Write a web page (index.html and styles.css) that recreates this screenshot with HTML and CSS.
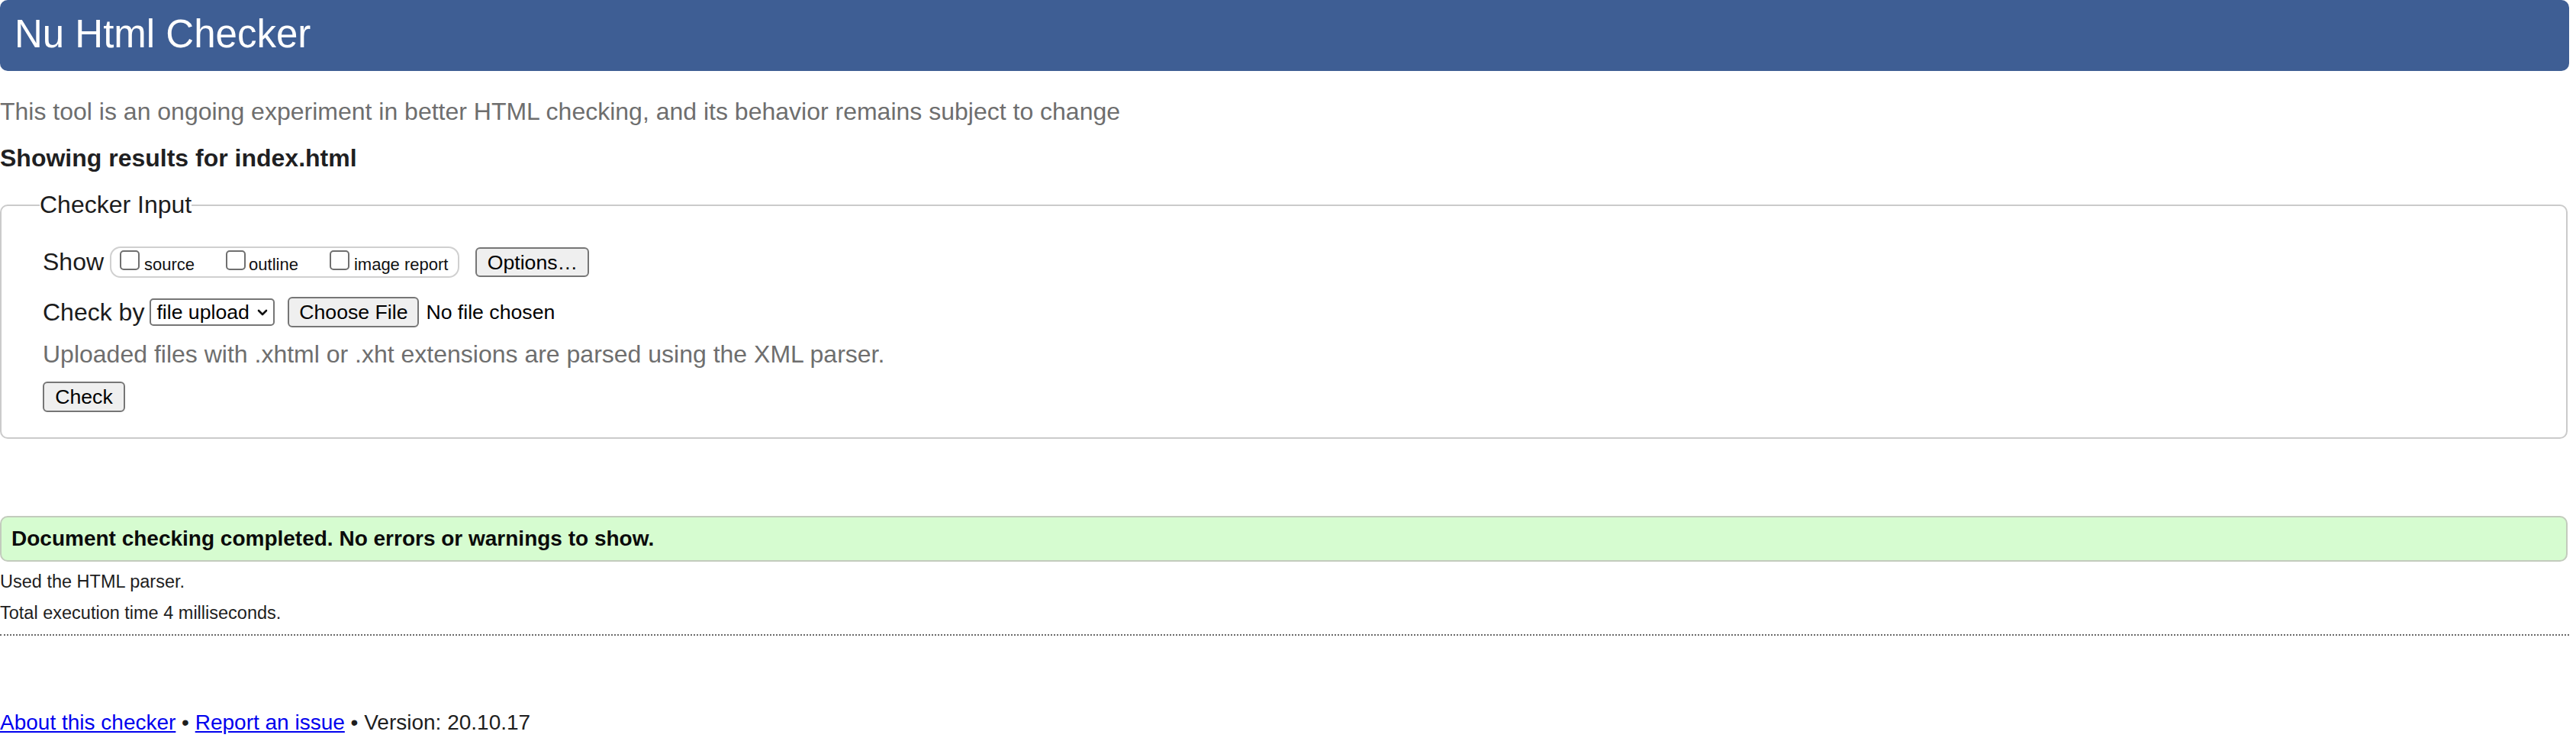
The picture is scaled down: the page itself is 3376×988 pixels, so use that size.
FILE: index.html
```html
<!DOCTYPE html>
<html lang="en">
<head>
<meta charset="utf-8">
<title>Showing results for index.html - Nu Html Checker</title>
<link rel="stylesheet" href="styles.css">
</head>
<body>
<header class="masthead"><h1 class="title">Nu Html Checker</h1></header>
<p class="intro">This tool is an ongoing experiment in better HTML checking, and its behavior remains subject to change</p>
<h2 class="results-for">Showing results for index.html</h2>
<form class="checker-form">
  <fieldset class="checker-input">
    <legend class="legend">Checker Input</legend>
    <div class="row row-show">
      <span class="row-label">Show</span>
      <span class="show-group">
        <label class="opt"><input type="checkbox" class="cb"><span class="opt-text">source</span></label>
        <label class="opt"><input type="checkbox" class="cb"><span class="opt-text opt-tight">outline</span></label>
        <label class="opt"><input type="checkbox" class="cb"><span class="opt-text">image report</span></label>
      </span>
      <button type="button" class="btn btn-options">Options…</button>
    </div>
    <div class="row row-checkby">
      <span class="row-label">Check by</span>
      <span class="select-wrap">
        <select class="select"><option>file upload</option></select>
        <svg class="chev" width="14" height="9" viewBox="0 0 14 9" aria-hidden="true"><path d="M2 2 L7 7 L12 2" fill="none" stroke="#111" stroke-width="2.6" stroke-linecap="round" stroke-linejoin="round"/></svg>
      </span>
      <button type="button" class="btn btn-file">Choose File</button>
      <span class="file-status">No file chosen</span>
    </div>
    <p class="hint">Uploaded files with .xhtml or .xht extensions are parsed using the XML parser.</p>
    <div class="row row-submit">
      <button type="button" class="btn btn-check">Check</button>
    </div>
  </fieldset>
</form>
<div class="success">Document checking completed. No errors or warnings to show.</div>
<p class="details details-first">Used the HTML parser.</p>
<p class="details">Total execution time 4 milliseconds.</p>
<hr class="sep">
<footer class="footer"><a class="flink" href="#about">About this checker</a> • <a class="flink" href="#issue">Report an issue</a> • Version: 20.10.17</footer>
</body>
</html>
```
FILE: styles.css
```css
html, body {
  margin: 0;
  padding: 0;
  background: #fff;
}

body {
  padding-right: 9px;
  font-family: "Liberation Sans", Arial, Helvetica, sans-serif;
  font-size: 32px;
  color: #222;
}

.masthead {
  margin: 0;
  height: 93px;
  background: #3e5e94;
  border-radius: 10px;
  display: flex;
  align-items: center;
}

.title {
  margin: 0 0 3px 0;
  padding: 0 0 0 19px;
  font-size: 51px;
  font-weight: normal;
  line-height: 60px;
  color: #fff;
}

.intro {
  margin: 34px 0 0;
  line-height: 38px;
  color: #6e6e6e;
}

.results-for {
  margin: 23px 0 0;
  font-size: 32px;
  line-height: 38px;
  font-weight: bold;
  color: #1f1f22;
}

.checker-form {
  margin: 24px 0 0;
}

.checker-input {
  margin: 0 2px 0 0;
  padding: 0 0 33px 54px;
  border: 2px solid #cbcbcb;
  border-radius: 10px;
  min-width: 0;
}

.legend {
  margin-left: -4px;
  padding: 0;
  font-size: 32px;
  line-height: 37px;
  color: #1c1c1c;
}

.row {
  display: flex;
  align-items: center;
}

.row-show {
  margin-top: 36px;
  height: 41px;
}

.row-label {
  color: #1c1c1c;
  line-height: 37px;
  white-space: nowrap;
}

.show-group {
  margin-left: 8px;
  height: 37px;
  padding: 0 13px 0 11px;
  border: 2px solid #d0d0d0;
  border-radius: 14px;
  display: flex;
  align-items: center;
  gap: 41px;
}

.opt {
  display: flex;
  align-items: center;
  font-size: 22px;
  color: #111;
  white-space: nowrap;
}

.cb {
  appearance: none;
  -webkit-appearance: none;
  width: 26px;
  height: 26px;
  margin: 0 0 6px 0;
  border: 2px solid #6f6f6f;
  border-radius: 5px;
  background: #fff;
  box-sizing: border-box;
}

.opt-text {
  margin-left: 6px;
  line-height: 26px;
  padding-top: 6px;
}

.opt-tight {
  margin-left: 4px;
}

.btn {
  font-family: "Liberation Sans", Arial, Helvetica, sans-serif;
  font-size: 26.67px;
  color: #000;
  background: #efefef;
  border: 2px solid #767676;
  border-radius: 6px;
  box-sizing: border-box;
  margin: 0;
  line-height: 30px;
  white-space: nowrap;
  display: inline-flex;
  align-items: center;
  justify-content: center;
}

.btn-options {
  margin-left: 21px;
  width: 149px;
  height: 39px;
  padding: 0;
}

.row-checkby {
  margin-top: 25px;
  height: 40px;
}

.select-wrap {
  margin-left: 7px;
  position: relative;
  display: inline-flex;
  align-items: center;
}

.select {
  appearance: none;
  -webkit-appearance: none;
  width: 164px;
  height: 36px;
  box-sizing: border-box;
  margin: 0;
  padding: 0 0 0 7px;
  border: 2px solid #767676;
  border-radius: 5px;
  background: #fff;
  color: #000;
  font-family: "Liberation Sans", Arial, Helvetica, sans-serif;
  font-size: 26.67px;
}

.chev {
  position: absolute;
  right: 9px;
  top: 14px;
  pointer-events: none;
}

.btn-file {
  margin-left: 17px;
  width: 172px;
  height: 40px;
  padding: 0;
}

.file-status {
  margin-left: 9px;
  font-size: 26.67px;
  color: #000;
  white-space: nowrap;
}

.hint {
  margin: 17px 0 0;
  line-height: 37px;
  color: #6e6e6e;
}

.row-submit {
  margin-top: 17px;
  height: 40px;
}

.btn-check {
  width: 108px;
  height: 40px;
  padding: 0;
}

.success {
  margin: 101px 2px 0 0;
  height: 60px;
  box-sizing: border-box;
  padding: 0 0 0 13px;
  background: #d6fcd0;
  border: 2px solid #c3cbbd;
  border-radius: 10px;
  font-size: 28px;
  font-weight: bold;
  line-height: 56px;
  color: #0b0b0b;
}

.details {
  margin: 0;
  font-size: 23.5px;
  line-height: 41px;
  color: #1e1e1e;
}

.details-first {
  margin-top: 6px;
}

.sep {
  margin: 7px 0 0;
  height: 0;
  border: 0;
  border-top: 2px dotted #6a6a6a;
}

.footer {
  margin-top: 98px;
  font-size: 28px;
  line-height: 32px;
  color: #1e1e1e;
}

.flink {
  color: #0000ee;
  text-decoration: underline;
}
```
